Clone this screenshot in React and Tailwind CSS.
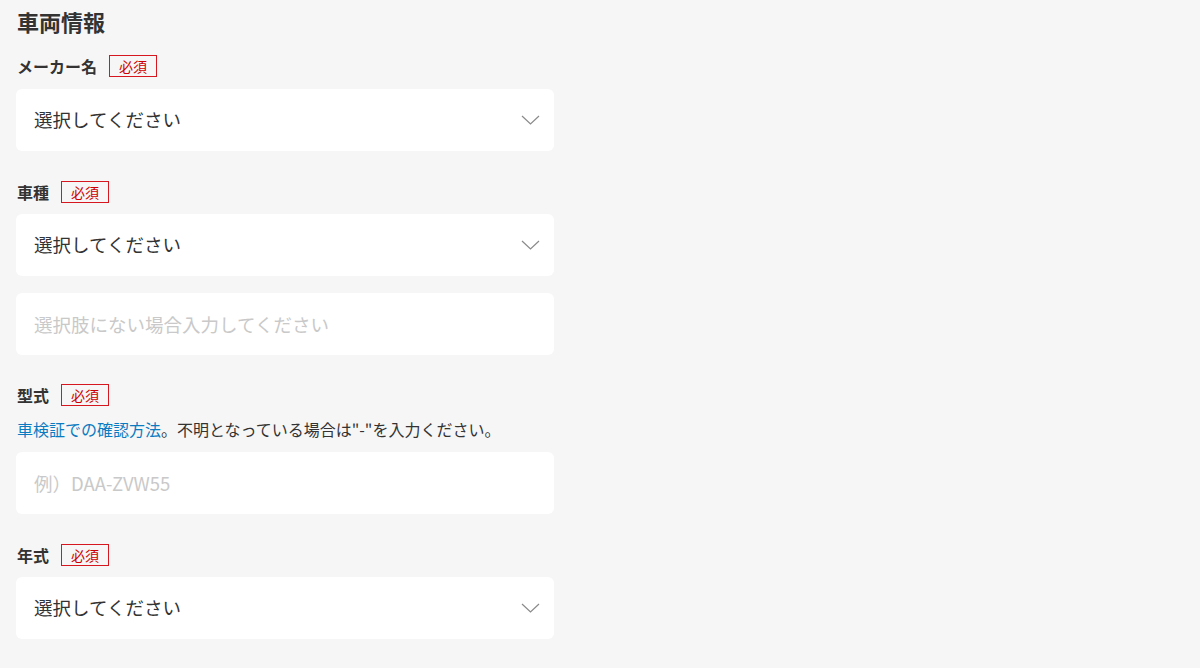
import { useState } from 'react';

const font = { fontFamily: '"Noto Sans CJK JP", "Noto Sans", sans-serif' };

const Required = () => (
  <span className="ml-3 inline-flex h-[22px] w-[48px] items-center justify-center border border-[#d7171f] text-[14px] leading-none text-[#cc0000]">
    必須
  </span>
);

const Label = ({ children }) => (
  <div className="flex h-[22px] items-center">
    <span className="-mt-px text-[16px] font-bold leading-none text-[#333]">{children}</span>
    <Required />
  </div>
);

const Chevron = () => (
  <svg width="19" height="10" viewBox="0 0 19 10" fill="none" className="text-[#8a8a8a]">
    <path d="M1 1l8.5 8L18 1" stroke="currentColor" strokeWidth="1.2" />
  </svg>
);

const SelectBox = ({ value, onChange }) => (
  <div className="relative h-[62px] w-[538px] rounded-[6px] bg-white">
    <select
      value={value}
      onChange={(e) => onChange(e.target.value)}
      className="h-full w-full appearance-none rounded-[6px] bg-transparent px-[18px] text-[18.5px] text-[#333] outline-none"
      style={font}
    >
      <option value="">選択してください</option>
    </select>
    <div className="pointer-events-none absolute right-[14px] top-1/2 -translate-y-1/2">
      <Chevron />
    </div>
  </div>
);

const TextBox = ({ placeholder, value, onChange }) => (
  <input
    type="text"
    placeholder={placeholder}
    value={value}
    onChange={(e) => onChange(e.target.value)}
    className="h-[62px] w-[538px] rounded-[6px] bg-white px-[18px] text-[18.5px] text-[#333] outline-none placeholder:text-[#c9c9c9]"
    style={font}
  />
);

const App = () => {
  const [form, setForm] = useState({ maker: '', model: '', modelText: '', type: '', year: '' });
  const updateForm = (field, value) => setForm((prev) => ({ ...prev, [field]: value }));

  return (
    <div className="min-h-[668px] bg-[#f6f6f6] pl-4 pt-[6px]" style={font}>
      <h2 className="pl-px text-[22px] font-bold leading-[30px] text-[#333]">車両情報</h2>

      <div className="mt-[19px] pl-px">
        <Label>メーカー名</Label>
      </div>
      <div className="mt-3">
        <SelectBox value={form.maker} onChange={(v) => updateForm('maker', v)} />
      </div>

      {/* 車種 */}
      <div className="mt-[30px] pl-px">
        <Label>車種</Label>
      </div>
      <div className="mt-[11px]">
        <SelectBox value={form.model} onChange={(v) => updateForm('model', v)} />
      </div>
      <div className="mt-[17px]">
        <TextBox
          placeholder="選択肢にない場合入力してください"
          value={form.modelText}
          onChange={(v) => updateForm('modelText', v)}
        />
      </div>

      {/* 型式 */}
      <div className="mt-[29px] pl-px">
        <Label>型式</Label>
      </div>
      <p className="mt-[12px] pl-px text-[16px] leading-[22px] text-[#333]">
        <a href="#" className="text-[#0b7bc1]">車検証での確認方法</a>。不明となっている場合は"-"を入力ください。
      </p>
      <div className="mt-[12px]">
        <TextBox placeholder="例）DAA-ZVW55" value={form.type} onChange={(v) => updateForm('type', v)} />
      </div>

      {/* 年式 */}
      <div className="mt-[30px] pl-px">
        <Label>年式</Label>
      </div>
      <div className="mt-[11px]">
        <SelectBox value={form.year} onChange={(v) => updateForm('year', v)} />
      </div>
    </div>
  );
};

export default App;
